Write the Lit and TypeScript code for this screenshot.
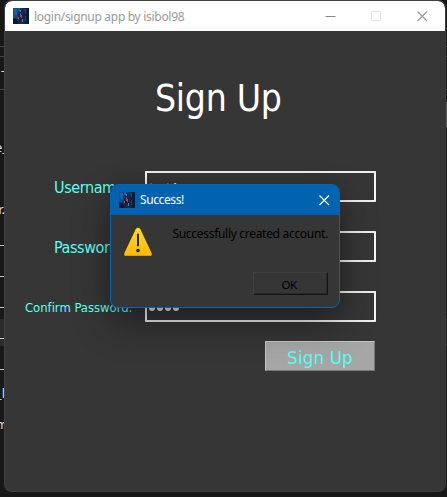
import { LitElement, html, css, svg } from "lit";
import { customElement } from "lit/decorators.js";

const cross = svg`<path d="M.5 .5L10 10M10 .5L.5 10" fill="none" stroke="currentColor" stroke-width="1.1"/>`;

@customElement("app-logo")
class AppLogo extends LitElement {
  static styles = css`:host{display:block;width:16px;height:16px}svg{display:block}`;
  render() {
    return html`<svg width="16" height="16" viewBox="0 0 16 16">
      <defs><linearGradient id="g"><stop offset="0" stop-color="#0c5a92"/><stop offset=".4" stop-color="#0a3f70"/><stop offset="1" stop-color="#041426"/></linearGradient></defs>
      <rect width="16" height="16" fill="url(#g)"/>
      <path d="M1 1h3v6H2zM5 0h2v3H5z" fill="#1673b0" opacity=".7"/>
      <path d="M0 10l4 1 2 5H0z" fill="#071a30"/>
      <path d="M7 2h2v3l2 3v7H9l-1-4-1 5H5l1-7-1-2 2-3z" fill="#231d3c"/>
      <path d="M7 5h1v2h1v3H8V9H7zM5 9h1v2H5z" fill="#b0436b"/>
      <path d="M7 2h1v2H7zM9 11h1v3H9z" fill="#5a7fa0"/>
      <path d="M11 1h2v4h-1zM12 8h1v5h-1z" fill="#0d4678"/>
    </svg>`;
  }
}

@customElement("message-box")
class MessageBox extends LitElement {
  static styles = css`
    :host{display:flex;flex-direction:column;box-sizing:border-box;width:230px;height:124px;border:1px solid #0863b1;border-radius:8px;background:#363636;overflow:hidden;box-shadow:0 16px 36px rgba(0,0,0,.36),0 0 14px rgba(0,0,0,.12);font:12px "Noto Sans",sans-serif;color:#000}
    .bar{display:flex;align-items:center;height:30px;flex:none;background:#0063b1;color:#fff;padding:0 9px 0 8px}
    .title{flex:1;padding-left:5px;letter-spacing:-.4px;position:relative;top:-1px}
    .close{width:11px;height:11px}
    .body{display:flex;justify-content:space-between;padding:12px 11px 0 12px;height:45px}
    .text{line-height:17px;letter-spacing:-.3px;margin-top:-2px;white-space:nowrap}
    .ok{align-self:flex-end;margin-right:11px;box-sizing:border-box;width:75px;height:23px;border:1px solid;border-color:#404040 #151515 #151515 #404040;box-shadow:inset -1px -1px #292929;background:#363636;color:#000;font:11.5px/20px "Noto Sans",sans-serif;letter-spacing:-.6px;padding:2px 3px 0 0;text-align:center}
  `;
  render() {
    return html`
      <div class="bar"><app-logo></app-logo><span class="title">Success!</span><svg class="close" viewBox="0 0 11 11">${cross}</svg></div>
      <div class="body">
        <svg width="30" height="30" viewBox="0 0 30 30">
          <defs><linearGradient id="w" x2="0" y2="1"><stop stop-color="#ffe000"/><stop offset="1" stop-color="#ffb60c"/></linearGradient></defs>
          <path d="M12.7 2.2Q15 -.7 17.3 2.2L28.6 26Q29.4 29 26.8 29H3.2Q.6 29 1.4 26z" fill="url(#w)"/>
          <path d="M1.5 26.5Q1.2 29 3.2 29H26.8Q28.8 29 28.5 26.5Q28 28 26.5 28H3.5Q2 28 1.5 26.5" fill="#dd9a12"/>
          <path d="M15 7.5V18.5" stroke="#242018" stroke-width="2" stroke-linecap="round"/><circle cx="15" cy="23.6" r="1.8" fill="#242018"/>
        </svg>
        <span class="text">Successfully created account.</span>
      </div>
      <button class="ok">OK</button>`;
  }
}

@customElement("app-root")
class AppRoot extends LitElement {
  static styles = css`
    :host{display:block;position:relative;width:447px;height:497px;overflow:hidden;background:#181818;font-family:"Noto Sans",sans-serif}
    .editor{display:grid;grid-template-rows:46px 10px 15px 18px 43px repeat(10,30.8px);width:447px;height:497px;box-sizing:border-box;padding-top:1px;color:#ddd;font:13px/29px "Noto Sans",sans-serif}
    .editor div{overflow:hidden}
    .rule{border-bottom:1px solid #464646}
    .code{display:flex;justify-content:flex-end;width:5px;white-space:nowrap}
    .dash{line-height:26px}
    .wide{width:8px}
    .active{background:#2b2b2b;width:447px;height:27px;line-height:27px;justify-content:flex-start;margin-top:1px}
    .active span{width:5px;display:flex;justify-content:flex-end}
    .window{position:absolute;left:4px;top:0;width:442px;height:492px;box-sizing:border-box;border:1px solid #414141;border-right-color:#3b3b3b;border-radius:8px;background:#363636;overflow:hidden}
    .scroll{position:absolute;left:445px;top:102px;width:2px;height:25px;background:#555}
    .bar{display:flex;align-items:center;height:30px;background:#fff;color:#999;padding:0 17px 0 8px;border-radius:7px 7px 0 0}
    .title{flex:1;font-size:12px;padding-left:5px;letter-spacing:-.3px}
    .controls{display:flex;align-items:center;gap:35px}
    .controls svg{display:block;width:11px;height:11px}
    h1{margin:0;padding:37px 0 0 150px;font-family:"DejaVu Sans Condensed","DejaVu Sans",sans-serif;font-stretch:condensed;font-weight:400;font-size:37px;line-height:62px;height:43px;color:#fff;letter-spacing:-.3px;white-space:nowrap}
    .form{display:grid;grid-template-columns:120px 231px;grid-auto-rows:31px;row-gap:29px;margin:60px 0 0 20px}
    .label{color:#5ffff2;font-family:"DejaVu Sans Condensed","DejaVu Sans",sans-serif;font-stretch:condensed;font-size:16px;line-height:33px;padding-left:29px;letter-spacing:-.4px;white-space:nowrap}
    .small{font-size:13px;padding-left:0;letter-spacing:-.05px}
    .field{box-sizing:border-box;border:2px solid #f5f5f5;border-top-color:#eee;border-bottom-color:#eee;border-radius:1px;color:#fff;font-size:13px;letter-spacing:-.5px;line-height:28px;padding-left:2px}
    .dots{display:flex;align-items:center;gap:2px;padding:3px 0 0 2px}
    .dots i{width:6px;height:6px;border-radius:50%;background:#f2f2f2}
    .submit{display:block;margin:19px 0 0 260px;width:110px;height:30px;box-sizing:border-box;border:1px solid;border-color:#c5c5c5 #777 #777 #c5c5c5;background:#a6a6a6;color:#55fff2;font:18.5px/28px "DejaVu Sans Condensed","DejaVu Sans",sans-serif;font-stretch:condensed;padding:2px 0 0;letter-spacing:.2px}
    message-box{position:absolute;left:110px;top:184px}
  `;
  render() {
    const code = ["e_", "", "r.", "r_", "r_", "r_", "r_", "r_", "_l", "m"];
    return html`
      <div class="editor">
        <div class="rule"></div><div class="rule"></div><div class="code dash">-</div><div class="rule"></div><div></div>
        ${code.map((c, i) => html`<div class="code ${i === 6 ? "active" : i === 0 || i === 9 ? "wide" : ""}"><span>${c}</span></div>`)}
      </div>
      <div class="scroll"></div>
      <div class="window">
        <div class="bar">
          <app-logo></app-logo><span class="title">login/signup app by isibol98</span>
          <div class="controls">
            <svg viewBox="0 0 11 11"><path d="M.5 5.5H10.5" stroke="#888"/></svg>
            <svg viewBox="0 0 11 11"><rect x=".5" y=".5" width="9" height="9" rx=".5" fill="none" stroke="#e5e5e5"/></svg>
            <svg viewBox="0 0 11 11">${cross}</svg>
          </div>
        </div>
        <h1>Sign Up</h1>
        <div class="form">
          <div class="label">Username:</div><div class="field">test4</div>
          <div class="label">Password:</div><div class="field"></div>
          <div class="label small">Confirm Password:</div><div class="field dots"><i></i><i></i><i></i><i></i></div>
        </div>
        <button class="submit">Sign Up</button>
      </div>
      <message-box></message-box>`;
  }
}
